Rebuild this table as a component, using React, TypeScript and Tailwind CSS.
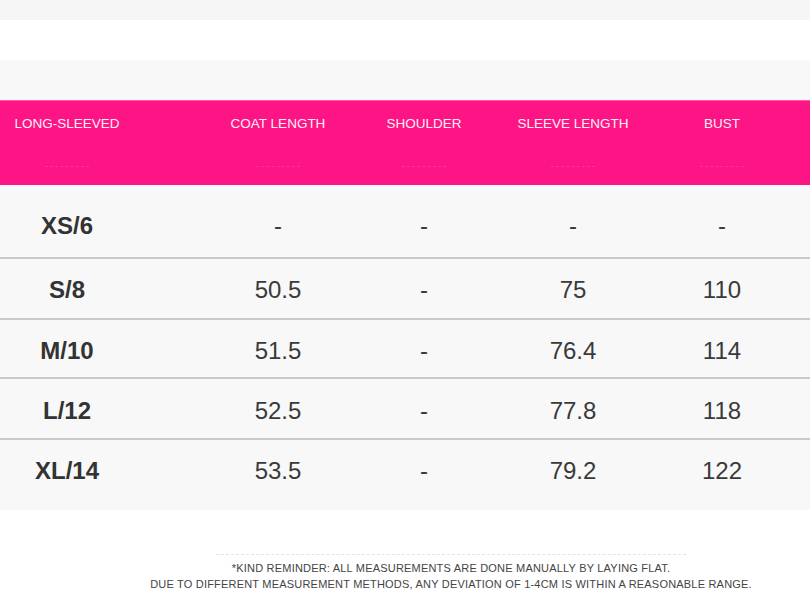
const headers = ["LONG-SLEEVED", "COAT LENGTH", "SHOULDER", "SLEEVE LENGTH", "BUST"];

const rows = [
  { size: "XS/6", vals: ["-", "-", "-", "-"], h: "h-[74px] pt-[10px]" },
  { size: "S/8", vals: ["50.5", "-", "75", "110"], h: "h-[61px] pt-[2px]" },
  { size: "M/10", vals: ["51.5", "-", "76.4", "114"], h: "h-[59px] pt-[4px]" },
  { size: "L/12", vals: ["52.5", "-", "77.8", "118"], h: "h-[61px] pt-[4px]" },
  { size: "XL/14", vals: ["53.5", "-", "79.2", "122"], h: "h-[70px] pb-[8px]" },
];

// per-column nudges so the centres land where the chart has them
const cellPad = ["pr-[38px]", "pl-[34px]", "", "", "pr-[14px]"];

const App = () => {
  return (
    <div className="w-[810px] h-[603px] bg-white overflow-hidden" style={{ fontFamily: '"Liberation Sans", Arial, sans-serif' }}>
      <div className="h-[20px] bg-[#f6f6f6]" />
      <div className="h-[40px] bg-white" />
      <div className="h-[40px] bg-[#f8f8f8]" />

      <div className="h-[85px] bg-[#fd1485] border-t border-[#ff5aa8]">
        <div className="grid grid-cols-[172px_178px_148px_150px_1fr] pt-[15px]">
          {headers.map((h, i) => (
            <div key={h} className={`text-center text-[13.5px] leading-[16px] text-[#fff0f6] ${cellPad[i]}`}>
              {h}
            </div>
          ))}
        </div>
        {/* faint leftovers of a second header line */}
        <div className="grid grid-cols-[172px_178px_148px_150px_1fr] mt-[34px]">
          {headers.map((h, i) => (
            <div key={h} className={`flex justify-center ${cellPad[i]}`}>
              <div className="w-[44px] border-t border-dashed border-[#ff8cc4] opacity-25" />
            </div>
          ))}
        </div>
      </div>

      <div className="bg-[#f8f8f8]">
        {rows.map((r, ri) => (
          <div
            key={r.size}
            className={`grid grid-cols-[172px_178px_148px_150px_1fr] items-center ${r.h} ${ri < rows.length - 1 ? "border-b-2 border-[#c9c9c9]" : ""}`}
          >
            <div className={`text-center text-[24px] leading-[28px] font-bold text-[#333333] ${cellPad[0]}`}>{r.size}</div>
            {r.vals.map((v, vi) => (
              <div key={vi} className={`text-center text-[24px] leading-[28px] text-[#3a3a3a] ${cellPad[vi + 1]}`}>
                {v}
              </div>
            ))}
          </div>
        ))}
      </div>

      <div className="flex flex-col items-center pl-[92px] pt-[44px]">
        <div className="w-[470px] border-t border-dashed border-[#e4e4e4]" />
        <p className="mt-[5px] text-[11px] leading-[16px] tracking-[0.2px] text-[#444444]">
          *KIND REMINDER: ALL MEASUREMENTS ARE DONE MANUALLY BY LAYING FLAT.
        </p>
        <p className="text-[11px] leading-[16px] tracking-[0.2px] text-[#444444]">
          DUE TO DIFFERENT MEASUREMENT METHODS, ANY DEVIATION OF 1-4CM IS WITHIN A REASONABLE RANGE.
        </p>
      </div>
    </div>
  );
};

export default App;
